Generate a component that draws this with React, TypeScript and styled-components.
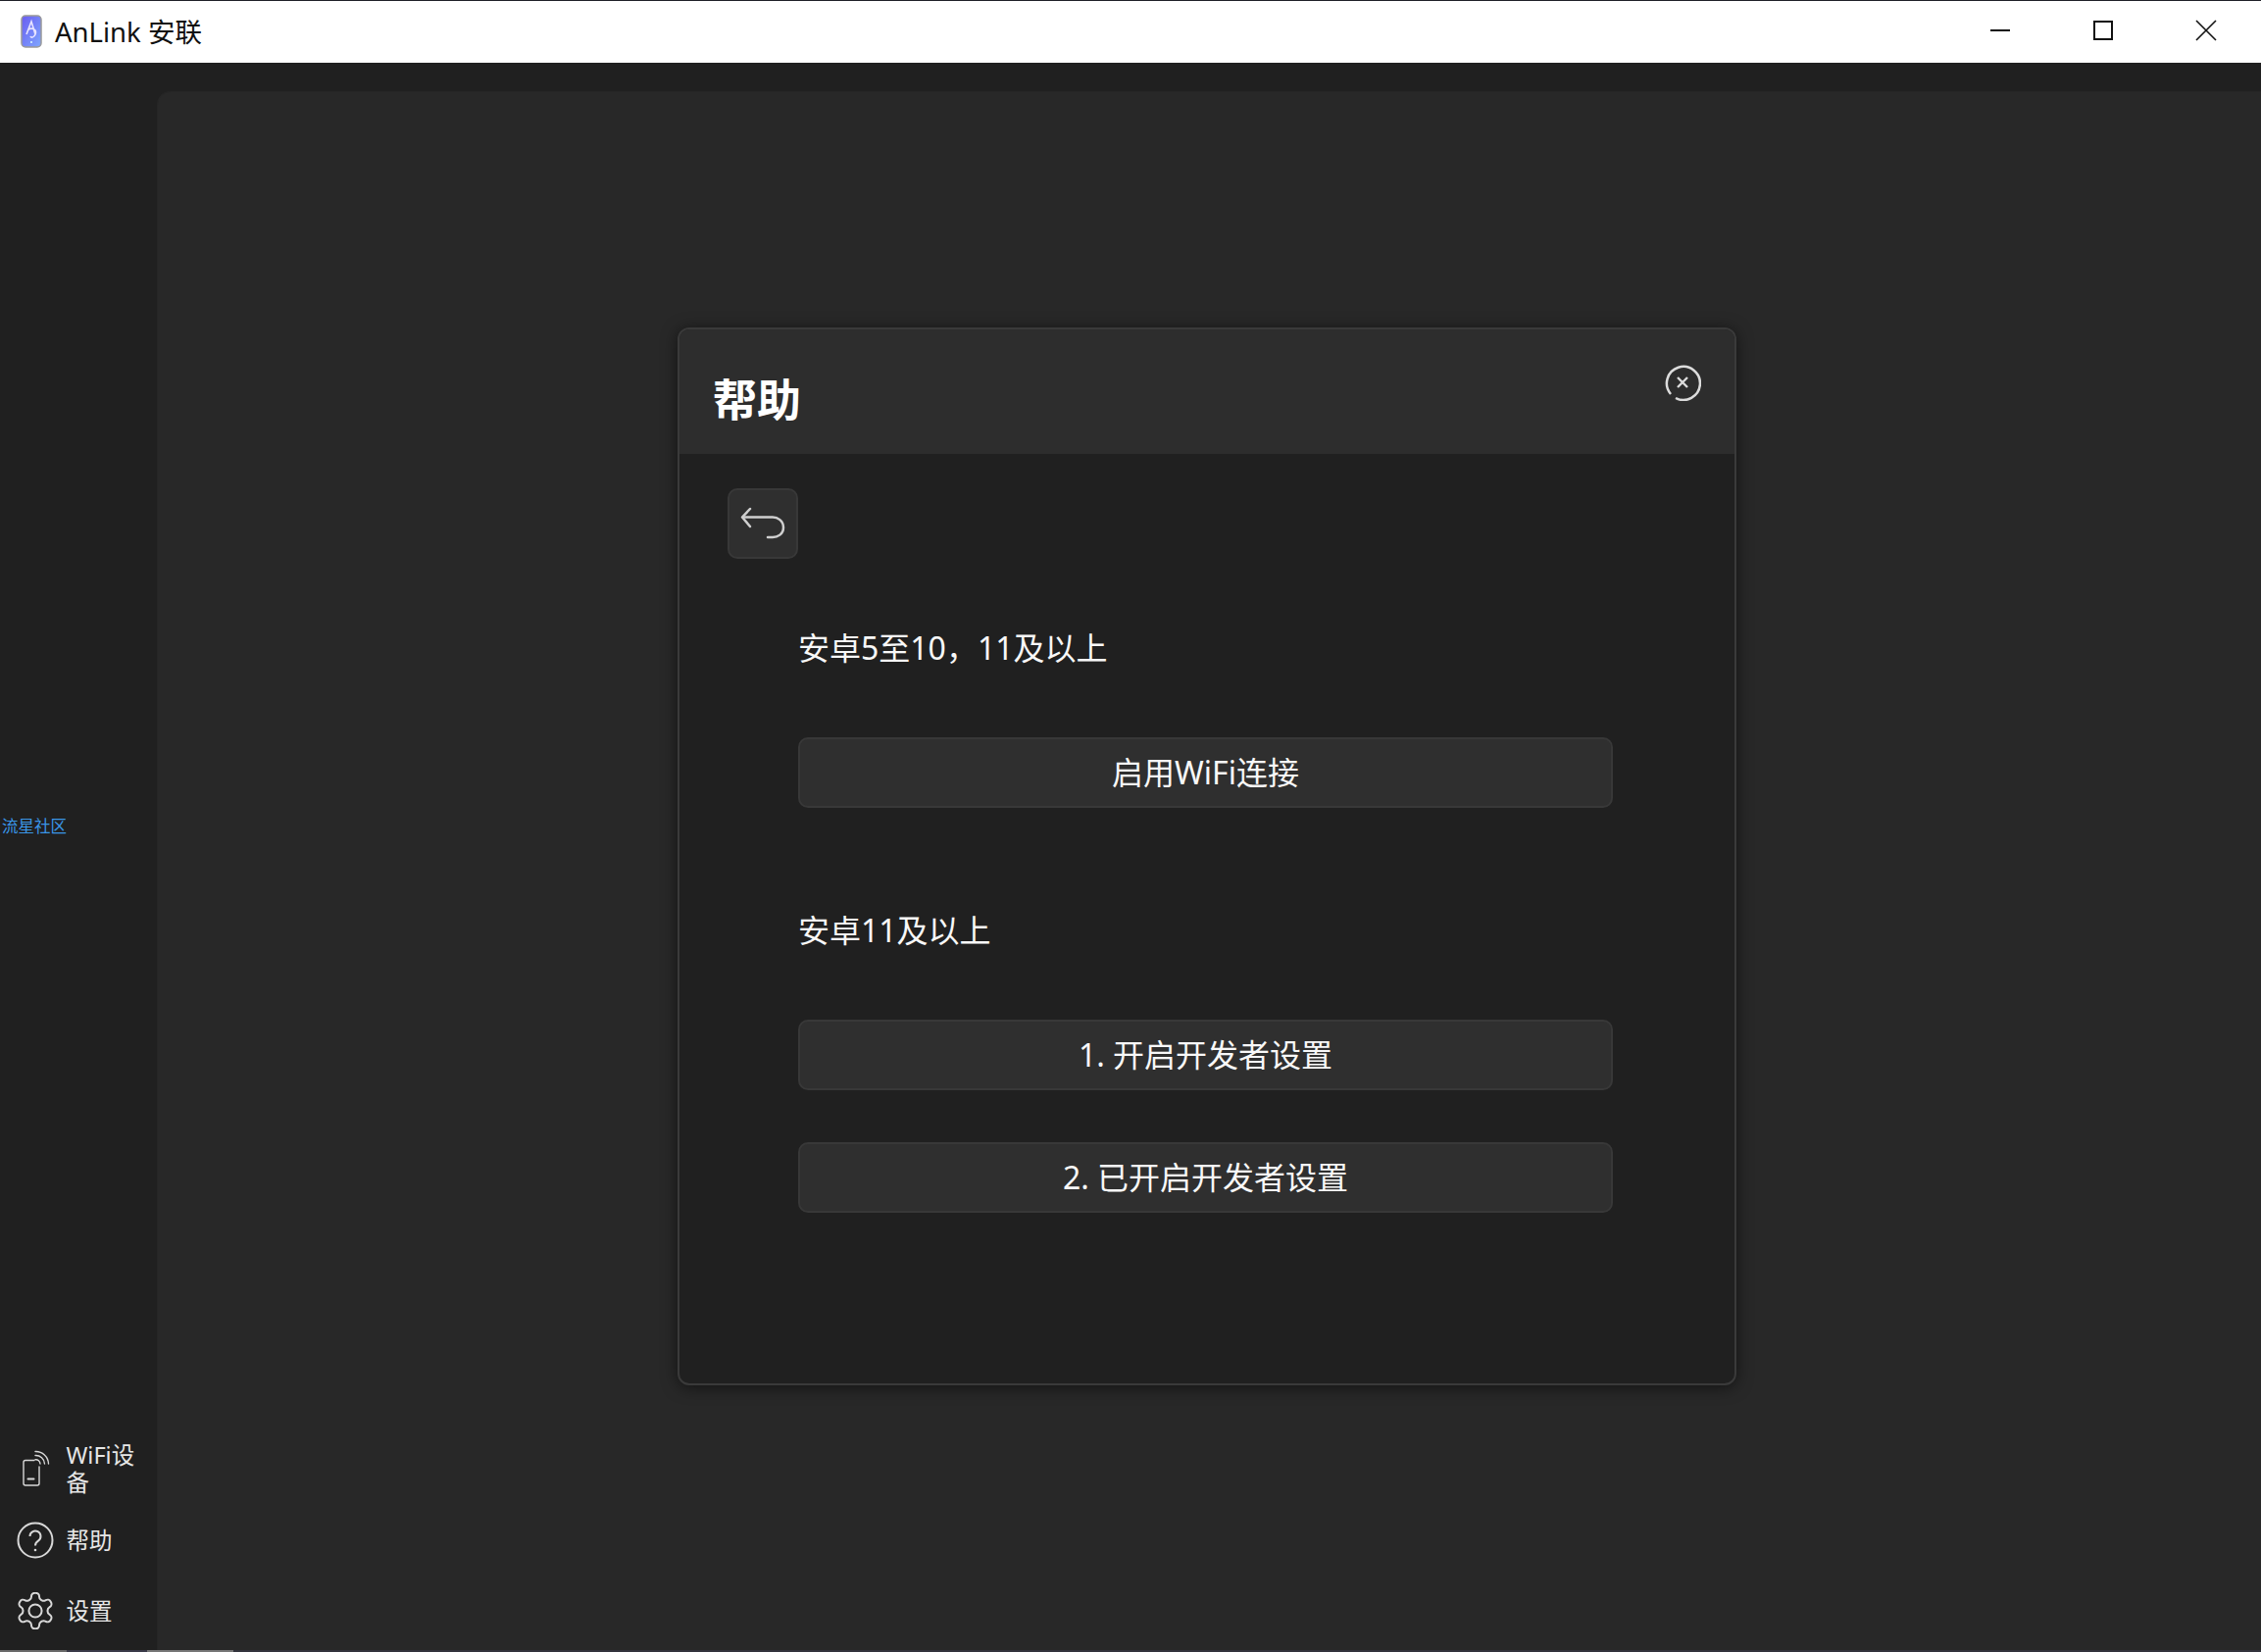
import React from 'react'
import styled, { createGlobalStyle } from 'styled-components'

const GlobalStyle = createGlobalStyle`
	html, body {
		margin: 0;
		padding: 0;
		background: #202020;
	}
	body {
		font-family: 'Noto Sans', 'Noto Sans CJK SC', sans-serif;
	}
`

const Window = styled.div`
	width: 2306px;
	height: 1685px;
	display: flex;
	flex-direction: column;
	overflow: hidden;
	position: relative;
	background: #202020;
`

const TitleBar = styled.header`
	height: 63px;
	flex: none;
	border-top: 1px solid #1f2028;
	background: #fff;
	display: flex;
	align-items: center;
	padding: 0 4px 0 21px;
	color: #111;
`

const AppLogo = styled.svg`
	width: 22px;
	height: 34px;
	margin-top: -1px;
`

const AppTitle = styled.div`
	margin-left: 13px;
	font-size: 27.5px;
	line-height: 34px;
	flex: 1;
`

const WindowButton = styled.div`
	width: 105px;
	height: 62px;
	margin-top: -3px;
	display: flex;
	align-items: center;
	justify-content: center;
	color: #111;
`

const Body = styled.div`
	flex: 1;
	display: flex;
	min-height: 0;
`

const Sidebar = styled.nav`
	width: 160px;
	flex: none;
	display: flex;
	flex-direction: column;
	justify-content: flex-end;
	padding-bottom: 6px;
	position: relative;
`

const CommunityLink = styled.a`
	position: absolute;
	left: 2px;
	top: 768px;
	font-size: 16.5px;
	line-height: 22px;
	color: #3a96e8;
`

const NavItem = styled.div<{ $height: number }>`
	height: ${p => p.$height}px;
	display: flex;
	align-items: center;
	padding-left: 17px;
	color: #d8d8d8;
`

const NavIcon = styled.svg`
	width: 38px;
	height: 38px;
	flex: none;
`

const NavLabel = styled.div`
	margin-left: 12.5px;
	width: 76px;
	font-size: 23.5px;
	line-height: 28px;
	color: #e6e6e6;
`

const Panel = styled.main`
	flex: 1;
	margin-top: 29px;
	background: #282828;
	border-top-left-radius: 14px;
	border-top: 1px solid #262626;
	border-left: 1px solid #262626;
`

const Dialog = styled.section`
	position: absolute;
	left: 691px;
	top: 334px;
	width: 1080px;
	height: 1079px;
	box-sizing: border-box;
	border: 2px solid #3a3a3a;
	border-radius: 12px;
	background: #202020;
	box-shadow: 0 2px 16px rgba(0, 0, 0, 0.55);
	overflow: hidden;
	display: flex;
	flex-direction: column;
	color: #fff;
`

const DialogHeader = styled.div`
	height: 127px;
	flex: none;
	background: #2d2d2d;
	display: flex;
	justify-content: space-between;
	padding: 0 34px 0 34px;
`

const DialogTitle = styled.h1`
	margin: 42px 0 0;
	font-size: 45px;
	line-height: 60px;
	font-weight: 700;
`

const CloseIcon = styled.svg`
	width: 38px;
	height: 38px;
	margin-top: 35px;
`

const DialogContent = styled.div`
	flex: 1;
	padding: 35px 0 0 49px;
	display: flex;
	flex-direction: column;
`

const BackButton = styled.div`
	width: 72px;
	height: 72px;
	box-sizing: border-box;
	border: 2px solid #383838;
	border-radius: 10px;
	background: #2f2f2f;
	display: flex;
	align-items: center;
	justify-content: center;
`

const Section = styled.div`
	margin-left: 72px;
	width: 831px;
	display: flex;
	flex-direction: column;
`

const SectionLabel = styled.div<{ $top: number; $bottom: number }>`
	margin: ${p => p.$top}px 0 ${p => p.$bottom}px;
	font-size: 32px;
	line-height: 44px;
	color: #f8f8f8;
`

const ActionButton = styled.div<{ $bottom?: number }>`
	height: 72px;
	margin-bottom: ${p => p.$bottom ?? 0}px;
	box-sizing: border-box;
	border: 2px solid #383838;
	border-radius: 10px;
	background: #2f2f2f;
	display: flex;
	align-items: center;
	justify-content: center;
	font-size: 32px;
	line-height: 44px;
	color: #f8f8f8;
`

const BottomStrip = styled.div`
	position: absolute;
	left: 0;
	right: 0;
	bottom: 0;
	height: 2px;
	background: linear-gradient(90deg, #6a6a6a 0 68px, #3a3a48 68px 150px, #777 150px 238px, #32333c 238px);
`

export default function App() {
	return (
		<Window>
			<GlobalStyle />
			<TitleBar>
				<AppLogo viewBox="0 0 22 34">
					<defs>
						<linearGradient id="logo" x1="0" y1="0" x2="1" y2="1">
							<stop offset="0" stopColor="#6a5cf0" />
							<stop offset="1" stopColor="#7fa8ff" />
						</linearGradient>
					</defs>
					<rect x="1" y="1" width="20" height="32" rx="4" fill="url(#logo)" stroke="#999" strokeWidth="1.5" />
					<path d="M6 20 L11 7 L15 20 M8 15 C12 13 17 15 15 20 C14 23 11 24 10 22" fill="none" stroke="#e8e4ff" strokeWidth="1.6" />
					<circle cx="11" cy="28" r="1" fill="#dff" />
				</AppLogo>
				<AppTitle>AnLink 安联</AppTitle>
				<WindowButton>
					<svg width="22" height="22" viewBox="0 0 22 22"><path d="M1 11h20" stroke="currentColor" strokeWidth="2" /></svg>
				</WindowButton>
				<WindowButton>
					<svg width="22" height="22" viewBox="0 0 22 22"><rect x="2" y="2" width="18" height="18" fill="none" stroke="currentColor" strokeWidth="2" /></svg>
				</WindowButton>
				<WindowButton>
					<svg width="22" height="22" viewBox="0 0 22 22"><path d="M1 1l20 20M21 1L1 21" stroke="currentColor" strokeWidth="1.6" /></svg>
				</WindowButton>
			</TitleBar>
			<Body>
				<Sidebar>
					<CommunityLink>流星社区</CommunityLink>
					<NavItem $height={75}>
						<NavIcon viewBox="0 0 38 38" fill="none" stroke="currentColor" strokeWidth="1.4" strokeLinecap="round">
							<path d="M18 10.500H9a2 2 0 0 0-2 2V34a2 2 0 0 0 2 2h12a2 2 0 0 0 2-2V17" />
							<path d="M11.500 29.500h6" strokeWidth="2" />
							<path d="M19 1.500A13 13 0 0 1 32.500 14M19 5.500A9 9 0 0 1 28.500 14M19 9.800A4.500 4.500 0 0 1 24 14" />
						</NavIcon>
						<NavLabel>WiFi设备</NavLabel>
					</NavItem>
					<NavItem $height={72}>
						<NavIcon viewBox="0 0 38 38" fill="none" stroke="currentColor" strokeWidth="2">
							<circle cx="19" cy="19" r="17.500" />
							<path d="M13.500 15a5.500 5.500 0 1 1 8.500 4.600c-2 1.300-3 2.300-3 4.900" />
							<circle cx="19" cy="29" r="1.300" fill="currentColor" stroke="none" />
						</NavIcon>
						<NavLabel>帮助</NavLabel>
					</NavItem>
					<NavItem $height={72}>
						<NavIcon viewBox="1.600 1.600 20.800 20.800" fill="none" stroke="currentColor" strokeWidth="1.100" strokeLinejoin="round">
							<path d="M12.220 2h-.440a2 2 0 0 0-2 2v.180a2 2 0 0 1-1 1.730l-.430.250a2 2 0 0 1-2 0l-.150-.080a2 2 0 0 0-2.730.730l-.220.380a2 2 0 0 0 .730 2.730l.150.100a2 2 0 0 1 1 1.720v.510a2 2 0 0 1-1 1.740l-.150.090a2 2 0 0 0-.730 2.730l.220.380a2 2 0 0 0 2.730.730l.150-.080a2 2 0 0 1 2 0l.430.250a2 2 0 0 1 1 1.730V20a2 2 0 0 0 2 2h.440a2 2 0 0 0 2-2v-.180a2 2 0 0 1 1-1.730l.430-.250a2 2 0 0 1 2 0l.150.080a2 2 0 0 0 2.730-.730l.220-.390a2 2 0 0 0-.730-2.730l-.150-.080a2 2 0 0 1-1-1.740v-.500a2 2 0 0 1 1-1.740l.150-.090a2 2 0 0 0 .730-2.730l-.220-.380a2 2 0 0 0-2.730-.730l-.150.080a2 2 0 0 1-2 0l-.430-.250a2 2 0 0 1-1-1.730V4a2 2 0 0 0-2-2z" />
							<circle cx="12" cy="12" r="3.600" />
						</NavIcon>
						<NavLabel>设置</NavLabel>
					</NavItem>
				</Sidebar>
				<Panel />
			</Body>
			<Dialog>
				<DialogHeader>
					<DialogTitle>帮助</DialogTitle>
					<CloseIcon viewBox="0 0 38 38" fill="none" stroke="#dcdcdc" strokeWidth="2.500">
						<path d="M7 31A17 17 0 1 1 12 35" />
						<path d="M14 14l10 10M24 14L14 24" strokeWidth="2.400" />
					</CloseIcon>
				</DialogHeader>
				<DialogContent>
					<BackButton>
						<svg width="46" height="34" viewBox="0 0 46 34" fill="none" stroke="#cfcfcf" strokeWidth="2.500" strokeLinecap="round" strokeLinejoin="round">
							<path d="M10 2L2 10.500L10 20" />
							<path d="M3 10.500H33C38 10.500 44 14 44 21C44 28 38 31 33 31H28" />
						</svg>
					</BackButton>
					<Section>
						<SectionLabel $top={69} $bottom={69}>安卓5至10，11及以上</SectionLabel>
						<ActionButton>启用WiFi连接</ActionButton>
						<SectionLabel $top={103} $bottom={69}>安卓11及以上</SectionLabel>
						<ActionButton $bottom={53}>1. 开启开发者设置</ActionButton>
						<ActionButton>2. 已开启开发者设置</ActionButton>
					</Section>
				</DialogContent>
			</Dialog>
			<BottomStrip />
		</Window>
	)
}
